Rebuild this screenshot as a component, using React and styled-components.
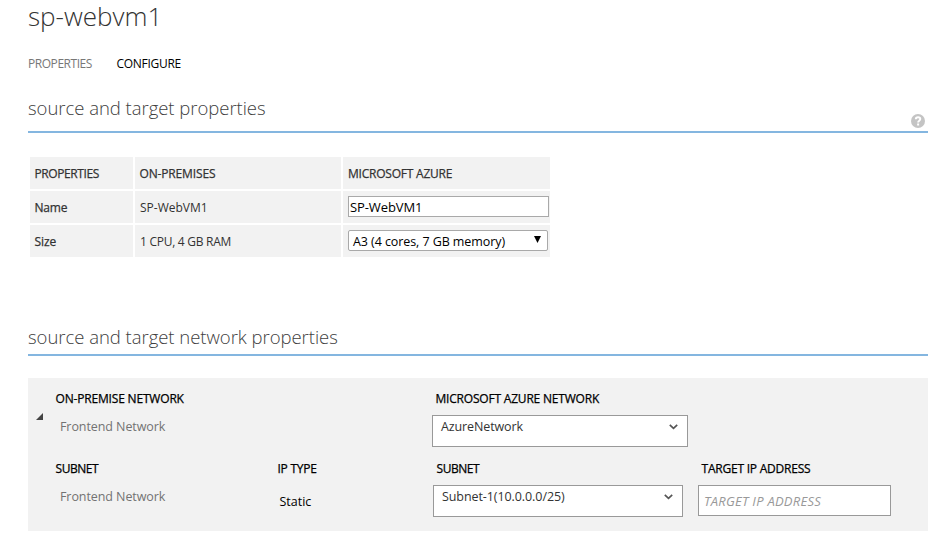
import React from "react";
import styled, { createGlobalStyle } from "styled-components";

const GlobalStyle = createGlobalStyle`
  * { box-sizing: border-box; }
  body {
    margin: 0;
    background: #fff;
    font-family: "Open Sans", "Noto Sans", sans-serif;
    font-size: 12px;
  }
`;

const Page = styled.main`
  width: 942px;
  height: 540px;
  padding: 0 14px 0 28px;
  display: flex;
  flex-direction: column;
`;

const Text = styled.span`
  display: inline-block;
  white-space: nowrap;
  letter-spacing: ${(p) => p.$ls || 0}px;
`;

const Title = styled.h1`
  margin: 0;
  height: 32px;
  line-height: 32px;
  font-size: 26px;
  font-weight: 300;
  color: #333;
`;

const Tabs = styled.nav`
  display: flex;
  height: 20px;
  line-height: 20px;
  margin-top: 22px;
`;

const Tab = styled.a`
  width: 88.5px;
  color: ${(p) => (p.$active ? "#000" : "#777")};
`;

const SectionHeader = styled.header`
  display: flex;
  justify-content: space-between;
  align-items: flex-end;
  height: 40px;
  margin-top: ${(p) => p.$top}px;
  border-bottom: 2px solid #84b6e0;
`;

const SectionTitle = styled.h2`
  margin: 0 0 ${(p) => p.$lift}px;
  line-height: 28px;
  font-size: 18.5px;
  font-weight: 300;
  color: #404040;
`;

const HelpIcon = styled.svg`
  width: 14px;
  height: 14px;
  margin: 0 3px 3px 0;
`;

const PropertyGrid = styled.div`
  display: grid;
  grid-template-columns: 103px 206px 207px;
  grid-auto-rows: 32px;
  gap: 2px;
  margin: 24px 0 0 2px;
`;

const Cell = styled.div`
  display: flex;
  align-items: center;
  padding: 1px 0 0 ${(p) => p.$pl || 5}px;
  background: #f2f2f2;
  color: #333;
  -webkit-text-stroke: ${(p) => (p.$strong ? "0.25px #333" : "0")};
`;

const NameInput = styled.div`
  width: 201px;
  height: 21px;
  margin-top: -2px;
  padding-left: 1px;
  line-height: 21px;
  border: 1px solid #a9a9a9;
  background: #fff;
  color: #000;
  font-size: 13px;
`;

const SizeSelect = styled.div`
  display: flex;
  justify-content: space-between;
  width: 200px;
  height: 21px;
  margin-top: -2px;
  padding: 0 6px 0 4px;
  line-height: 21px;
  border: 1px solid #a9a9a9;
  border-radius: 2px;
  background: #fff;
  color: #000;
  font-size: 12.5px;
`;

const SelectArrow = styled.svg`
  width: 7px;
  height: 7px;
  margin-top: 5px;
`;

const NetworkPanel = styled.section`
  margin-top: 22px;
  width: 900px;
  height: 153px;
  padding-top: 11px;
  background: #f2f2f2;
`;

const PanelRow = styled.div`
  display: grid;
  grid-template-columns: 27px 222px 155px 265px 1fr;
  height: ${(p) => (p.$label ? 20 : 32)}px;
  margin-bottom: ${(p) => (p.$label ? 6 : 12)}px;
`;

const Label = styled.div`
  line-height: 20px;
  padding-left: ${(p) => p.$pl || 0.5}px;
  font-size: 12px;
  color: #000;
  -webkit-text-stroke: 0.25px #000;
`;

const Value = styled.div`
  line-height: 22px;
  padding: ${(p) => (p.$dark ? "6px 0 0 2.5px" : "1px 0 0 5px")};
  font-size: 12.5px;
  color: ${(p) => (p.$dark ? "#000" : "#737373")};
`;

const Toggle = styled.svg`
  width: 7px;
  height: 7px;
  margin: -2px 0 0 8px;
`;

const Dropdown = styled.div`
  display: flex;
  justify-content: space-between;
  width: ${(p) => p.$w}px;
  height: 32px;
  margin-left: ${(p) => p.$ml || 0}px;
  padding: 0 9px 0 8px;
  line-height: 22px;
  border: 1px solid #999;
  background: #fff;
  color: #333;
  font-size: 12.5px;
`;

const Chevron = styled.svg`
  width: 9px;
  height: 6px;
  margin-top: 8px;
`;

const IpField = styled.div`
  width: 193px;
  height: 31px;
  margin-left: 1px;
  padding-left: 5px;
  line-height: 31px;
  border: 1px solid #999;
  background: #fff;
  color: #999;
  font-size: 13px;
  font-style: italic;
`;

function DropdownField({ text, ls, w, ml }) {
  return (
    <Dropdown $w={w} $ml={ml}>
      <Text $ls={ls}>{text}</Text>
      <Chevron viewBox="0 0 9 6">
        <path d="M0.8 0.8 L4.5 4.3 L8.2 0.8" fill="none" stroke="#555" strokeWidth="1.7" />
      </Chevron>
    </Dropdown>
  );
}

export default function App() {
  return (
    <>
      <GlobalStyle />
      <Page>
        <Title><Text>sp-webvm1</Text></Title>
        <Tabs>
          <Tab><Text $ls={-0.45}>PROPERTIES</Text></Tab>
          <Tab $active><Text $ls={-0.28}>CONFIGURE</Text></Tab>
        </Tabs>

        <SectionHeader $top={19}>
          <SectionTitle $lift={9}><Text $ls={-0.03}>source and target properties</Text></SectionTitle>
          <HelpIcon viewBox="0 0 14 14">
            <circle cx="7" cy="7" r="7" fill="#c4c4c4" />
            <path d="M4.8 5.2 C4.8 2.6 9.3 2.7 9.3 5.1 C9.3 6.7 7.1 6.7 7.1 8.4" fill="none" stroke="#fff" strokeWidth="1.9" />
            <rect x="6.1" y="9.5" width="2" height="2" fill="#fff" />
          </HelpIcon>
        </SectionHeader>

        <PropertyGrid>
          <Cell $strong $pl={4.5}><Text $ls={-0.4}>PROPERTIES</Text></Cell>
          <Cell $strong $pl={4.5}><Text $ls={-0.15}>ON-PREMISES</Text></Cell>
          <Cell $strong><Text $ls={-0.22}>MICROSOFT AZURE</Text></Cell>
          <Cell $strong $pl={4.5}><Text $ls={-0.2}>Name</Text></Cell>
          <Cell><Text>SP-WebVM1</Text></Cell>
          <Cell><NameInput><Text $ls={-0.1}>SP-WebVM1</Text></NameInput></Cell>
          <Cell $strong $pl={4.5}><Text $ls={-0.1}>Size</Text></Cell>
          <Cell><Text $ls={-0.27}>1 CPU, 4 GB RAM</Text></Cell>
          <Cell>
            <SizeSelect>
              <Text $ls={-0.08}>A3 (4 cores, 7 GB memory)</Text>
              <SelectArrow viewBox="0 0 7 7"><path d="M0 0 H7 L3.5 7 Z" fill="#000" /></SelectArrow>
            </SizeSelect>
          </Cell>
        </PropertyGrid>

        <SectionHeader $top={59}>
          <SectionTitle $lift={3}><Text $ls={-0.03}>source and target network properties</Text></SectionTitle>
        </SectionHeader>

        <NetworkPanel>
          <PanelRow $label>
            <span />
            <Label><Text $ls={-0.18}>ON-PREMISE NETWORK</Text></Label>
            <span />
            <Label $pl={3.5}><Text $ls={-0.2}>MICROSOFT AZURE NETWORK</Text></Label>
          </PanelRow>
          <PanelRow>
            <Toggle viewBox="0 0 7 7"><path d="M7 0 V7 H0 Z" fill="#444" /></Toggle>
            <Value><Text $ls={-0.08}>Frontend Network</Text></Value>
            <span />
            <DropdownField text="AzureNetwork" ls={-0.12} w={256} />
          </PanelRow>
          <PanelRow $label>
            <span />
            <Label><Text $ls={-0.45}>SUBNET</Text></Label>
            <Label><Text $ls={-0.25}>IP TYPE</Text></Label>
            <Label $pl={4.5}><Text $ls={-0.45}>SUBNET</Text></Label>
            <Label $pl={4.5}><Text $ls={-0.22}>TARGET IP ADDRESS</Text></Label>
          </PanelRow>
          <PanelRow>
            <span />
            <Value><Text $ls={-0.08}>Frontend Network</Text></Value>
            <Value $dark><Text>Static</Text></Value>
            <DropdownField text="Subnet-1(10.0.0.0/25)" ls={-0.08} w={250} ml={1} />
            <IpField><Text $ls={0.25}>TARGET IP ADDRESS</Text></IpField>
          </PanelRow>
        </NetworkPanel>
      </Page>
    </>
  );
}
